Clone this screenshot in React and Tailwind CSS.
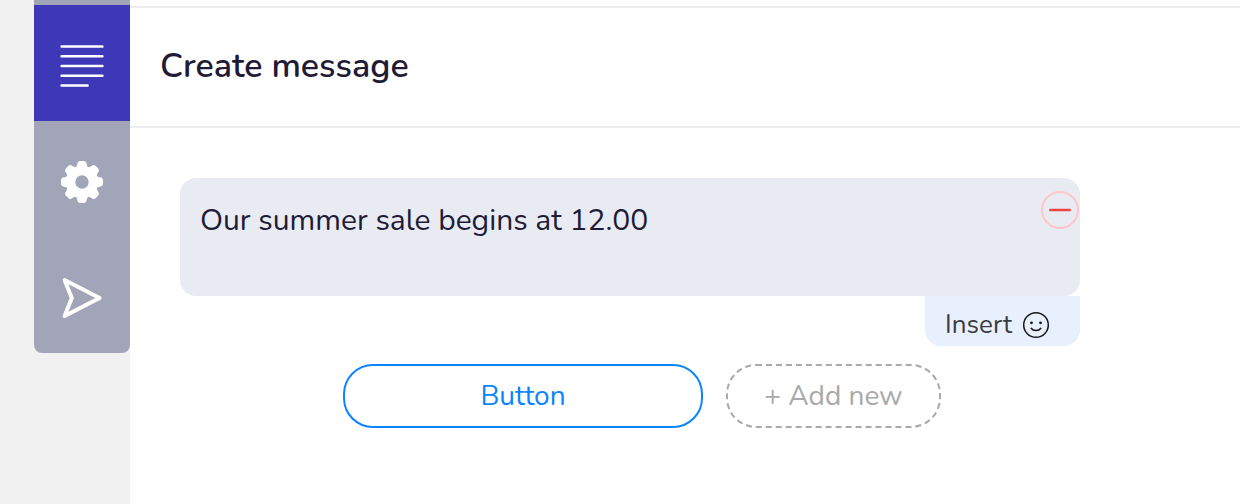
import { useState } from "react";

function LinesIcon() {
  return (
    <svg width="44" height="44" viewBox="0 0 44 44" fill="none" stroke="#fff" strokeWidth="2.5" strokeLinecap="round" aria-hidden="true">
      <path d="M1.6 2.4h40.8M1.6 12.2h40.8M1.6 22h40.8M1.6 31.8h40.8M1.6 41.6h26" />
    </svg>
  );
}

function GearIcon() {
  return (
    <svg width="44" height="44" viewBox="-22 -22 44 44" fill="none" aria-hidden="true">
      <circle r="11.4" stroke="#fff" strokeWidth="9.4" />
      <g fill="#fff">
        {[0, 45, 90, 135, 180, 225, 270, 315].map((angle) => (
          <path
            key={angle}
            transform={`rotate(${angle})`}
            d="M-6.6 -14.2C-5.4 -15.2 -4.9 -16.4 -4.7 -18C-4.4 -20 -3.4 -21 -1.6 -21H1.6C3.4 -21 4.4 -20 4.7 -18C4.9 -16.4 5.4 -15.2 6.6 -14.2Z"
          />
        ))}
      </g>
    </svg>
  );
}

function SendIcon() {
  return (
    <svg width="44" height="44" viewBox="0 0 44 44" fill="none" stroke="#fff" strokeWidth="4" strokeLinejoin="round" aria-hidden="true">
      <path d="M4.6 4L39.6 22L4.6 40L11.8 22Z" />
    </svg>
  );
}

function SmileIcon() {
  return (
    <svg width="28" height="28" viewBox="0 0 28 28" fill="none" stroke="#161616" strokeWidth="1.5" strokeLinecap="round" aria-hidden="true">
      <circle cx="14" cy="14" r="12.3" />
      <path d="M9.2 17.3C11.2 20.2 16.8 20.2 18.8 17.3" />
      <g fill="#161616" stroke="none">
        <circle cx="9.5" cy="11.8" r="1.4" />
        <circle cx="18.5" cy="11.8" r="1.4" />
      </g>
    </svg>
  );
}

const tabs = [
  { label: "Message", Icon: LinesIcon },
  { label: "Settings", Icon: GearIcon },
  { label: "Send", Icon: SendIcon },
];

export default function App() {
  const [active, setActive] = useState("Message");
  const [text, setText] = useState("Our summer sale begins at 12.00");

  return (
    <div className="flex min-h-screen bg-white font-[Nunito,'Open_Sans',sans-serif] text-[#1f1b36]">
      <aside className="shrink-0 bg-[#f1f1f1] pl-[34px]">
        <nav className="flex w-24 flex-col overflow-hidden rounded-b-lg bg-[#a2a4b8] pt-[5px]">
          {tabs.map(({ label, Icon }) => (
            <button
              key={label}
              type="button"
              aria-label={label}
              onClick={() => setActive(label)}
              className={
                active === label
                  ? "flex h-[116px] items-center justify-center bg-[#3e38b8] pt-[6px]"
                  : "flex h-[116px] items-center justify-center pt-[6px]"
              }
            >
              <Icon />
            </button>
          ))}
        </nav>
      </aside>

      <main className="min-w-0 flex-1 pt-[6px]">
        <header className="border-y-2 border-[#ededed] px-[30px] pt-[35px] pb-[37px]">
          <h1 className="text-[34px] leading-[46px] font-semibold">Create message</h1>
        </header>

        <section className="max-w-[1000px] px-[50px] pt-[50px]">
          <div className="relative">
            <textarea
              aria-label="Message text"
              value={text}
              onChange={(e) => setText(e.target.value)}
              className="block h-[118px] w-full resize-none rounded-2xl bg-[#e9ebf3] pt-[22px] pr-14 pb-5 pl-5 text-[30px] leading-[42px] outline-none"
            />
            <button
              type="button"
              aria-label="Remove message"
              className="absolute top-[13px] right-[1px] flex size-[38px] items-center justify-center rounded-full border-2 border-[#ffc5c8]"
            >
              <svg width="22" height="4" viewBox="0 0 22 4" aria-hidden="true">
                <rect y="0.7" width="22" height="2.6" rx="1.3" fill="#ef4444" />
              </svg>
            </button>
          </div>

          <div className="flex justify-end">
            <button
              type="button"
              className="flex h-[50px] items-center gap-2.5 rounded-b-2xl bg-[#e8f0fe] pt-2 pr-[30px] pl-5 text-[26px] leading-8 text-[#3c3c3c]"
            >
              Insert
              <SmileIcon />
            </button>
          </div>

          <div className="mt-[18px] flex justify-center gap-[23px] pl-6">
            <button
              type="button"
              className="h-16 w-[360px] rounded-[30px] border-2 border-[#0a84ff] text-[28px] font-normal text-[#0a84ff]"
            >
              Button
            </button>
            <button
              type="button"
              className="h-16 w-[215px] rounded-[30px] border-2 border-dashed border-[#a9a9a9] text-[28px] font-normal text-[#a9a9a9]"
            >
              + Add new
            </button>
          </div>
        </section>
      </main>
    </div>
  );
}
